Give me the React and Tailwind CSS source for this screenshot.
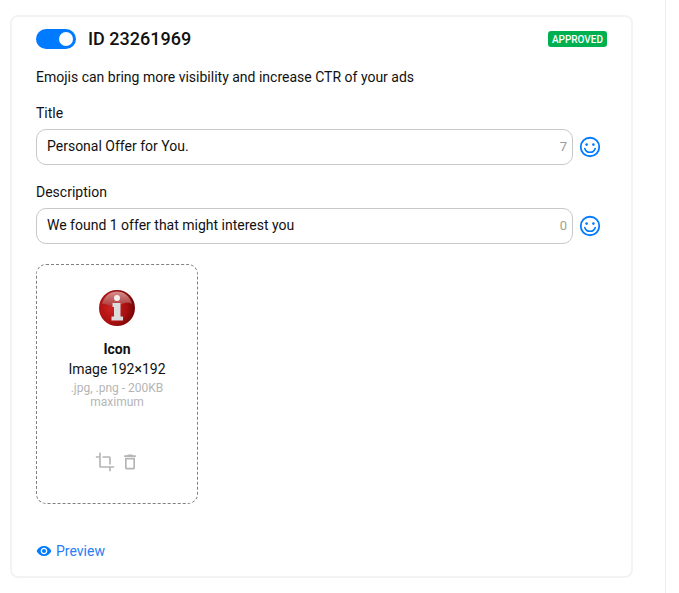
function Smiley() {
  return (
    <svg width="22" height="22" viewBox="0 0 22 22" fill="none" className="shrink-0">
      <circle cx="11" cy="11" r="9.25" stroke="#007bff" strokeWidth="1.8" />
      <circle cx="7.6" cy="8.6" r="1.3" fill="#007bff" />
      <circle cx="14.4" cy="8.6" r="1.3" fill="#007bff" />
      <path d="M5.8 12.6c.9 2.4 2.8 3.7 5.2 3.7s4.300-1.300 5.200-3.700" stroke="#007bff" strokeWidth="1.600" strokeLinecap="round" />
    </svg>
  )
}

function InfoBall() {
  return (
    <svg width="36" height="36" viewBox="0 0 36 36">
      <defs>
        <radialGradient id="ball" cx="0.35" cy="0.5" r="0.7">
          <stop offset="0" stopColor="#d02222" />
          <stop offset="0.6" stopColor="#a80f0f" />
          <stop offset="1" stopColor="#650404" />
        </radialGradient>
        <linearGradient id="shine" x1="0" y1="0" x2="0" y2="1">
          <stop offset="0" stopColor="#e0a4a4" />
          <stop offset="1" stopColor="#a83c3c" />
        </linearGradient>
      </defs>
      <circle cx="18" cy="18" r="18" fill="url(#ball)" />
      <path d="M3 14C5 6 11 1.500 18 1.500S31 6 33 14C27 11 24 14 18 16C12 18 8 13 3 14Z" fill="url(#shine)" opacity="0.85" />
      <circle cx="18" cy="8" r="3" fill="#f4efef" />
      <path d="M13.500 13H21.500V26.500H24V30.500H12.500V26.500H15V17H13.500Z" fill="#dcdcdc" />
    </svg>
  )
}

function Field({ label, value, count, countColor, className }) {
  return (
    <div className={className}>
      <div className="text-sm leading-[20px] text-[#111111]">{label}</div>
      <div className="mt-[6px] flex items-center gap-[6px]">
        <div className="flex h-[36px] w-[537px] items-center justify-between rounded-[10px] border border-[#c8c8c8] pl-[10px] pr-[5px] text-sm">
          <span className="pb-[2px] text-[#111111]">{value}</span>
          <span className={`text-[13px] ${countColor}`}>{count}</span>
        </div>
        <Smiley />
      </div>
    </div>
  )
}

export default function App() {
  return (
    <div className="h-[593px] w-[666px] border-r border-[#eeeeee] bg-white pl-[10px] pt-[15px] font-['Roboto',sans-serif]">
      <div className="h-[563px] w-[623px] rounded-[8px] border-2 border-[#f3f3f3] pl-[24px] pr-[24px] pt-[10px]">
        <div className="flex h-[24px] items-center justify-between">
          <div className="flex items-center gap-[12px]">
            <div className="flex h-[20px] w-[40px] items-center justify-end rounded-full bg-[#007bff] pr-[3px]">
              <div className="h-[14px] w-[14px] rounded-full bg-white" />
            </div>
            <span className="text-lg font-medium text-[#111111]">ID 23261969</span>
          </div>
          <span className="flex h-[16px] items-center rounded-[3px] bg-[#00b050] px-[4px] text-[10px] font-medium text-white">APPROVED</span>
        </div>

        <p className="mt-[16px] text-sm leading-[20px] text-[#111111]">Emojis can bring more visibility and increase CTR of your ads</p>

        <Field className="mt-[16px]" label="Title" value="Personal Offer for You." count="7" countColor="text-[#999999]" />
        <Field className="mt-[17px]" label="Description" value="We found 1 offer that might interest you" count="0" countColor="text-[#a3a38a]" />

        <div className="mt-[20px] flex h-[240px] w-[162px] flex-col items-center rounded-[10px] border border-dashed border-[#808080] px-[8px] pt-[25px]">
          <InfoBall />
          <div className="mt-[13px] text-sm font-bold leading-[20px] text-[#111111]">Icon</div>
          <div className="text-sm leading-[20px] text-[#111111]">Image 192×192</div>
          <div className="mt-[2px] text-center text-xs leading-[14px] text-[#b5b5b5]">.jpg, .png - 200KB maximum</div>
          <div className="ml-[1px] mt-[43px] flex items-center gap-[5px] text-[#b5b5b5]">
            <svg width="20" height="20" viewBox="0 0 24 24" fill="currentColor">
              <path d="M17 15h2V7c0-1.100-.9-2-2-2H9v2h8v8zM7 17V1H5v4H1v2h4v10c0 1.100.9 2 2 2h10v4h2v-4h4v-2H7z" />
            </svg>
            <svg width="20" height="20" viewBox="0 0 24 24" fill="currentColor">
              <path d="M6 19c0 1.100.9 2 2 2h8c1.100 0 2-.9 2-2V7H6v12zM8 9h8v10H8V9zm7.500-5l-1-1h-5l-1 1H5v2h14V4h-3.500z" />
            </svg>
          </div>
        </div>

        <a className="mt-[37px] flex items-center gap-[4px] text-sm leading-[20px] text-[#2a7cf6]">
          <svg width="16" height="16" viewBox="0 0 24 24" fill="#007bff">
            <path d="M12 4.500C7 4.500 2.730 7.610 1 12c1.730 4.390 6 7.500 11 7.500s9.270-3.110 11-7.500c-1.730-4.390-6-7.500-11-7.500zM12 17c-2.760 0-5-2.240-5-5s2.240-5 5-5 5 2.240 5 5-2.240 5-5 5zm0-8c-1.660 0-3 1.340-3 3s1.340 3 3 3 3-1.340 3-3-1.340-3-3-3z" />
          </svg>
          Preview
        </a>
      </div>
    </div>
  )
}
